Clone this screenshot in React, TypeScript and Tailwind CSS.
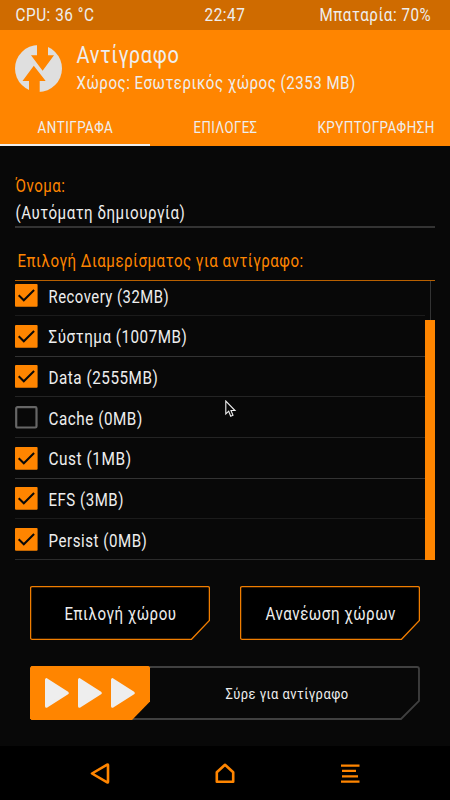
import { useLayoutEffect, useRef, useState } from "react";
import clsx from "clsx";

interface FitTextProps {
  text: string;
  width: number;
  className?: string;
}

const TABS = [
  { label: "ΑΝΤΙΓΡΑΦΑ", width: 76 },
  { label: "ΕΠΙΛΟΓΕΣ", width: 64 },
  { label: "ΚΡΥΠΤΟΓΡΑΦΗΣΗ", width: 117 },
];

const PARTITIONS = [
  { label: "Recovery (32MB)", width: 121, checked: true, line: "border-[#1b1b1b]" },
  { label: "Σύστημα (1007MB)", width: 139, checked: true, line: "border-[#333]" },
  { label: "Data (2555MB)", width: 110, checked: true, line: "border-[#242424]" },
  { label: "Cache (0MB)", width: 94, checked: false, line: "border-[#242424]" },
  { label: "Cust (1MB)", width: 83, checked: true, line: "border-[#333]" },
  { label: "EFS (3MB)", width: 75, checked: true, line: "border-[#1b1b1b]" },
  { label: "Persist (0MB)", width: 99, checked: true, line: "border-[#2b2b2b]" },
];

// Condenses a line of text horizontally so that it takes up the given width.
function FitText({ text, width, className }: FitTextProps) {
  const ref = useRef<HTMLSpanElement>(null);
  const [scale, setScale] = useState(1);

  useLayoutEffect(() => {
    if (!ref.current) return;
    const natural = ref.current.offsetWidth;
    if (natural > 0) setScale(width / natural);
  }, [text, width]);

  return (
    <span className={clsx("block whitespace-nowrap", className)} style={{ width }}>
      <span
        ref={ref}
        className="inline-block origin-left tracking-[0.035em]"
        style={{ transform: `translateX(0.5px) scaleX(${scale})` }}
      >
        {text}
      </span>
    </span>
  );
}

function Logo() {
  return (
    <svg className="h-[47px] w-[47px]" viewBox="0 0 47 47">
      <circle cx="23.5" cy="23.5" r="23.5" fill="#dfdfdf" />
      <path
        d="M22 -1V10.3H16L27.6 25.8L39 10.3H33V-1ZM14 48V36H7.5L18.8 20.7L30.7 36H24.7V48Z"
        fill="#ff8500"
      />
    </svg>
  );
}

function Checkbox({ checked }: { checked: boolean }) {
  return (
    <svg className="mt-[0.5px] h-[23px] w-[23px] shrink-0" viewBox="0 0 23 23" fill="none">
      {checked ? (
        <>
          <rect width="22.6" height="22.8" rx="1" fill="#ff8500" />
          <path d="M3.7 11.2L8.8 16.3L19.1 6" stroke="#080808" strokeWidth="2" />
        </>
      ) : (
        <rect x="1.2" y="1.2" width="20.3" height="20.3" rx="1.2" stroke="#666" strokeWidth="2.2" />
      )}
    </svg>
  );
}

function ActionButton({ label, width }: { label: string; width: number }) {
  return (
    <button type="button" className="relative flex h-[54px] w-[180px] items-center justify-center">
      <svg className="absolute inset-0" width="180" height="54" viewBox="0 0 180 54">
        <path
          d="M2 .7H178Q179.4 .7 179.4 2V34.5L161.5 53.3H2Q.6 53.3 .6 52V2Q.6 .7 2 .7Z"
          fill="#000"
          stroke="#f07d00"
          strokeWidth="1.3"
        />
      </svg>
      <FitText text={label} width={width} className="relative pt-[2px] text-[18px]" />
    </button>
  );
}

function SwipeSlider() {
  return (
    <div className="relative mt-[26px] ml-[30px] flex h-[54px] w-[390px] items-center">
      <svg className="absolute inset-0" width="390" height="54" viewBox="0 0 390 54" fill="none">
        <path
          d="M2 1H387Q389 1 389 3V35L371 53H2Z"
          stroke="#404040"
          strokeWidth="1.8"
        />
        <path d="M1.5 0H118.5L120 1.5V35.5L102 54H1.5L0 52.5V1.5Z" fill="#ff8500" />
        <g fill="#eee" stroke="#eee" strokeWidth="3" strokeLinejoin="round">
          <path d="M16.5 13.7V40.3L37.3 27Z" />
          <path d="M49.5 13.7V40.3L70.3 27Z" />
          <path d="M82.5 13.7V40.3L103.3 27Z" />
        </g>
      </svg>
      <FitText text="Σύρε για αντίγραφο" width={123} className="relative ml-[195px] pt-[2px] text-[15px]" />
    </div>
  );
}

function NavBar() {
  return (
    <nav className="grid h-[54px] grid-cols-3 items-center bg-black px-[37.5px]">
      <button type="button" aria-label="Back" className="flex justify-center">
        <svg width="20" height="22" viewBox="0 0 20 22" fill="none">
          <path d="M2 11.5L17.2 2.6Q18 2.2 18 3.2V19.8Q18 20.8 17.2 20.4Z" stroke="#ff8500" strokeWidth="2.6" strokeLinejoin="round" />
        </svg>
      </button>
      <button type="button" aria-label="Home" className="flex justify-center">
        <svg width="20" height="22" viewBox="0 0 20 22" fill="none">
          <path d="M1.8 10.2L10 2.8L18.2 10.2V19.8H1.8Z" stroke="#ff8500" strokeWidth="2.6" strokeLinejoin="round" />
        </svg>
      </button>
      <button type="button" aria-label="Menu" className="flex justify-center">
        <svg width="20" height="22" viewBox="0 0 20 22" fill="none">
          <path d="M1 3.6H19.5M2 8.9H16M2 14.3H18M1 19.6H19.5" stroke="#ff8500" strokeWidth="2.3" />
        </svg>
      </button>
    </nav>
  );
}

export default function App() {
  return (
    <div className="relative flex h-[800px] w-[450px] flex-col overflow-hidden bg-[#080808] font-['Roboto','Noto_Sans',sans-serif] text-[18px] leading-6 text-[#eee]">
      <div className="flex h-[30px] items-start justify-between bg-[#cf6b00] pt-[3px] pr-[19px] pl-[15px]">
        <FitText text="CPU: 36 °C" width={79} />
        <FitText text="22:47" width={41} className="ml-[36px]" />
        <FitText text="Μπαταρία: 70%" width={112} />
      </div>

      <header className="flex h-[116px] flex-col bg-[#ff8500]">
        <div className="flex h-[79px] pt-[15px] pl-[15px]">
          <Logo />
          <div className="ml-[14px] -mt-[4px]">
            <FitText text="Αντίγραφο" width={103} className="text-[23px] leading-[30px]" />
            <FitText text="Χώρος: Εσωτερικός χώρος (2353 MB)" width={279} />
          </div>
        </div>
        <div className="grid h-[37px] grid-cols-3">
          {TABS.map((tab, i) => (
            <div
              key={tab.label}
              className={clsx(
                "flex justify-center border-b-2 pt-[7px] text-[16px]",
                i === 0 ? "border-[#eee]" : "border-transparent"
              )}
            >
              <FitText text={tab.label} width={tab.width} />
            </div>
          ))}
        </div>
      </header>

      <main className="h-[600px]">
        <div className="mx-[15px] flex h-[82px] flex-col border-b-2 border-[#333] pt-[28px]">
          <FitText text="Όνομα:" width={50} className="text-[#ff8500]" />
          <FitText text="(Αυτόματη δημιουργία)" width={170} className="mt-[3px]" />
        </div>
        <FitText
          text="Επιλογή Διαμερίσματος για αντίγραφο:"
          width={286}
          className="mt-[21px] ml-[17px] text-[#ff8500]"
        />

        <div className="mx-[15px] mt-[7px] flex h-[280px] overflow-hidden border-t border-[#b86000]">
          <ul className="-mt-[5.67px] w-[410px]">
            {PARTITIONS.map((p) => (
              <li
                key={p.label}
                className={clsx("flex h-[40.67px] items-center border-b", p.line)}
              >
                <Checkbox checked={p.checked} />
                <FitText text={p.label} width={p.width} className="mt-[3px] ml-[9.5px]" />
              </li>
            ))}
          </ul>
          <div className="flex w-[10px] flex-col items-center">
            <div className="ml-px h-[39px] w-px bg-[#333]" />
            <div className="h-[240px] w-full bg-[#ff8500]" />
          </div>
        </div>

        <div className="mt-[26px] flex gap-[30px] pl-[30px]">
          <ActionButton label="Επιλογή χώρου" width={112} />
          <ActionButton label="Ανανέωση χώρων" width={130} />
        </div>
        <SwipeSlider />
      </main>

      <NavBar />

      <svg className="absolute top-[400px] left-[225px]" width="12" height="18" viewBox="0 0 12 18">
        <path
          d="M.8 1V14L3.7 11.2L5.7 16.2L8 15.2L6 10.5H10Z"
          fill="#080808"
          stroke="#eee"
          strokeWidth="1.1"
        />
      </svg>
    </div>
  );
}
